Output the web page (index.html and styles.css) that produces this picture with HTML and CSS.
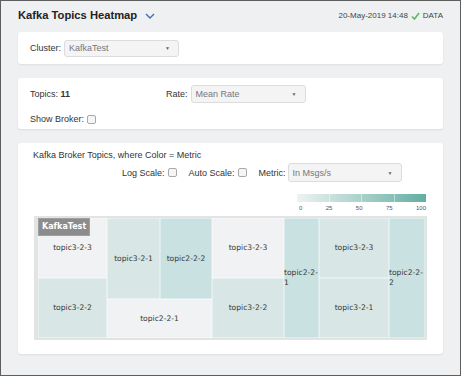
FILE: index.html
```html
<!DOCTYPE html>
<html lang="en">
<head>
  <meta charset="UTF-8">
  <meta name="viewport" content="width=device-width, initial-scale=1">
  <title>Kafka Topics Heatmap</title>
  <link rel="stylesheet" href="styles.css">
</head>
<body>

<div class="frame">

  <header class="top">
    <h1>Kafka Topics Heatmap
      <svg class="chevron" width="10" height="6" viewBox="0 0 10 6"><polyline points="1,1 5,5 9,1" fill="none" stroke="#3f6fa8" stroke-width="1.4"/></svg>
    </h1>
    <div class="status">20-May-2019 14:48
      <svg class="check" width="9" height="8" viewBox="0 0 9 8"><polyline points="1,4.5 3.5,7 8,1" fill="none" stroke="#5cb85c" stroke-width="1.6"/></svg>
      DATA
    </div>
  </header>

  <section class="card card-cluster">
    <span class="label">Cluster:</span>
    <div class="select select-cluster"><span>KafkaTest</span><span class="arrow">&#9660;</span></div>
  </section>

  <section class="card card-topics">
    <div class="row">
      <div class="topics">Topics: <b>11</b></div>
      <span class="label">Rate:</span>
      <div class="select select-rate"><span>Mean Rate</span><span class="arrow">&#9660;</span></div>
    </div>
    <div class="row row-broker">
      <span class="label">Show Broker:</span>
      <span class="checkbox"></span>
    </div>
  </section>

  <section class="card card-map">
    <div class="map-title">Kafka Broker Topics, where Color = Metric</div>
    <div class="controls">
      <span class="label">Log Scale:</span>
      <span class="checkbox"></span>
      <span class="label spaced">Auto Scale:</span>
      <span class="checkbox"></span>
      <span class="label spaced">Metric:</span>
      <div class="select select-metric"><span>In Msgs/s</span><span class="arrow">&#9660;</span></div>
    </div>

    <div class="legend">
      <div class="legend-bar">
        <span></span><span></span><span></span><span></span>
      </div>
      <div class="legend-labels">
        <span>0</span><span>25</span><span>50</span><span>75</span><span>100</span>
      </div>
    </div>

    <div class="heatmap">
      <div class="group-name">KafkaTest</div>
      <div class="cell low a"><span>topic3-2-3</span></div>
      <div class="cell mid b"><span>topic3-2-2</span></div>
      <div class="cell mid c"><span>topic3-2-1</span></div>
      <div class="cell high d"><span>topic2-2-2</span></div>
      <div class="cell low e"><span>topic2-2-1</span></div>
      <div class="cell low f"><span>topic3-2-3</span></div>
      <div class="cell mid g"><span>topic3-2-2</span></div>
      <div class="cell high h"><span>topic2-2-1</span></div>
      <div class="cell mid i"><span>topic3-2-3</span></div>
      <div class="cell mid j"><span>topic3-2-1</span></div>
      <div class="cell high k"><span>topic2-2-2</span></div>
    </div>
  </section>

</div>

</body>
</html>
```

FILE: styles.css
```css
html, body {
  margin: 0;
  padding: 0;
}
body {
  font-family: "Liberation Sans", Arial, sans-serif;
  color: #333;
  background: #fff;
}
.frame {
  box-sizing: border-box;
  width: 461px;
  height: 376px;
  border: 1px solid #5e5e5e;
  background: #eff0f2;
  padding: 0 17px;
}

/* header */
.top {
  height: 31px;
  box-sizing: border-box;
  padding-top: 8px;
  display: flex;
  justify-content: space-between;
  align-items: flex-start;
}
h1 {
  margin: 0;
  font-size: 11.2px;
  line-height: 13px;
  font-weight: bold;
  color: #222;
  display: flex;
  align-items: center;
}
.chevron {
  margin-left: 8px;
  margin-top: 1px;
}
.status {
  font-size: 8px;
  line-height: 13px;
  color: #444;
  display: flex;
  align-items: center;
}
.check {
  margin: 0 3px 0 3px;
}

/* cards */
.card {
  background: white;
  border-radius: 3px;
  box-shadow: 0 1px 2px rgba(0, 0, 0, 0.08);
  margin-bottom: 14px;
  box-sizing: border-box;
}
.label {
  font-size: 9px;
  color: #333;
}
.select {
  box-sizing: border-box;
  background: #f4f4f5;
  border: 1px solid #dcdcdc;
  border-radius: 3px;
  display: flex;
  align-items: center;
  justify-content: space-between;
  padding: 0 8px 0 4px;
  font-size: 9px;
  color: #777;
}
.arrow {
  font-size: 5px;
  color: #666;
}
.checkbox {
  display: inline-block;
  box-sizing: border-box;
  width: 9px;
  height: 9px;
  border: 1px solid #a9a9a9;
  border-radius: 2px;
  background: #f5f5f5;
  margin-left: 3px;
}

.card-cluster {
  height: 32px;
  padding: 0 12px;
  display: flex;
  align-items: center;
}
.select-cluster {
  width: 115px;
  height: 17px;
  margin-left: 3px;
}

.card-topics {
  height: 51px;
  padding: 7px 12px 0 12px;
}
.row {
  display: flex;
  align-items: center;
}
.topics {
  width: 136px;
  font-size: 9px;
}
.select-rate {
  width: 115px;
  height: 18px;
  margin-left: 3px;
}
.row-broker {
  margin-top: 10px;
  height: 12px;
}

.card-map {
  height: 211px;
  padding: 7px 16px 0 16px;
}
.map-title {
  font-size: 9px;
  line-height: 11px;
  margin-left: -1px;
}
.controls {
  margin-top: 2px;
  height: 19px;
  display: flex;
  align-items: center;
  padding-left: 88px;
}
.spaced {
  margin-left: 12px;
}
.select-metric {
  width: 114px;
  height: 19px;
  margin-left: 2px;
}

/* legend */
.legend {
  margin-top: 12px;
  display: flex;
  flex-direction: column;
  align-items: flex-end;
  padding-right: 1px;
}
.legend-bar {
  width: 129px;
  height: 8px;
  display: flex;
  background: linear-gradient(to right, #eef3f2, #63aea2);
}
.legend-bar span {
  flex: 1;
  border-left: 1px solid rgba(255, 255, 255, 0.45);
}
.legend-bar span:first-child {
  border-left: none;
}
.legend-labels {
  width: 129px;
  height: 11px;
  display: flex;
  justify-content: space-between;
  align-items: center;
  font-size: 6px;
  color: #555;
  padding-left: 2px;
  box-sizing: border-box;
}

/* heatmap */
.heatmap {
  position: relative;
  margin-top: 3px;
  box-sizing: border-box;
  width: 393px;
  height: 124px;
  padding: 2px 2px 2px 4px;
  background: #e2e3e3;
  display: grid;
  grid-template-columns: 69px 53px 52px 72px 35px 70px 36px;
  grid-template-rows: 60px 21px 39px;
  font-family: "DejaVu Sans", Verdana, sans-serif;
  font-size: 7.6px;
  color: #3a3a3a;
}
.group-name {
  position: absolute;
  top: 2px;
  left: 4px;
  z-index: 1;
  background: #8c8c8c;
  color: white;
  font-weight: bold;
  font-size: 8px;
  line-height: 10px;
  padding: 3px 3px;
  border: 1px solid #a0a0a0;
}
.cell {
  display: flex;
  align-items: center;
  justify-content: center;
  overflow: hidden;
  box-shadow: inset 0 0 0 0.5px rgba(255, 255, 255, 0.7);
}
.cell span {
  text-align: left;
  line-height: 10px;
}
.low { background: #f1f2f3; }
.mid { background: #d8e7e6; }
.high { background: #c9e1e1; }

.a { grid-column: 1; grid-row: 1; }
.b { grid-column: 1; grid-row: 2 / 4; }
.c { grid-column: 2; grid-row: 1 / 3; }
.d { grid-column: 3; grid-row: 1 / 3; }
.e { grid-column: 2 / 4; grid-row: 3; }
.f { grid-column: 4; grid-row: 1; }
.g { grid-column: 4; grid-row: 2 / 4; }
.h { grid-column: 5; grid-row: 1 / 4; justify-content: flex-start; }
.i { grid-column: 6; grid-row: 1; }
.j { grid-column: 6; grid-row: 2 / 4; }
.k { grid-column: 7; grid-row: 1 / 4; justify-content: flex-start; }
```
